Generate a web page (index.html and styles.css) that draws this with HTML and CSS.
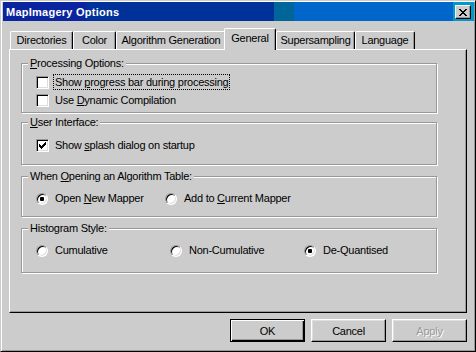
FILE: index.html
```html
<!DOCTYPE html>
<html>
	<head>
		<meta charset="UTF-8">
		<title>MapImagery Options</title>
		<link rel="stylesheet" href="styles.css">
	</head>
	<body>
		<div class="window">
			<div class="titlebar">
				<span class="title">MapImagery Options</span>
				<span class="close">
					<svg width="8" height="7" viewBox="0 0 8 7"><path fill="#000" d="M0 0h2v1h-2z M6 0h2v1h-2z M1 1h2v1h-2z M5 1h2v1h-2z M2 2h4v1h-4z M3 3h2v1h-2z M2 4h4v1h-4z M1 5h2v1h-2z M5 5h2v1h-2z M0 6h2v1h-2z M6 6h2v1h-2z"/></svg>
				</span>
			</div>
			<div class="tabs">
				<span class="tab t-dir">Directories</span>
				<span class="tab t-color">Color</span>
				<span class="tab t-algo">Algorithm Generation</span>
				<span class="tab t-gen active">General</span>
				<span class="tab t-super">Supersampling</span>
				<span class="tab t-lang">Language</span>
			</div>
			<div class="panel">
				<div class="group g-proc">
					<span class="legend"><u>P</u>rocessing Options:</span>
					<div class="opt">
						<span class="check"></span>
						<span class="lbl focus">Show <u>p</u>rogress bar during processing</span>
					</div>
					<div class="opt">
						<span class="check"></span>
						<span class="lbl">Use <u>D</u>ynamic Compilation</span>
					</div>
				</div>
				<div class="group g-ui">
					<span class="legend"><u>U</u>ser Interface:</span>
					<div class="opt">
						<span class="check">
							<svg width="7" height="7" viewBox="0 0 7 7"><path fill="#000" d="M6 0h1v1h-1z M5 1h2v1h-2z M0 2h1v1h-1z M4 2h3v1h-3z M0 3h2v1h-2z M3 3h3v1h-3z M0 4h5v1h-5z M1 5h3v1h-3z M2 6h1v1h-1z"/></svg>
						</span>
						<span class="lbl">Show <u>s</u>plash dialog on startup</span>
					</div>
				</div>
				<div class="group g-open">
					<span class="legend">When <u>O</u>pening an Algorithm Table:</span>
					<div class="opt">
						<div class="choice c-open">
							<span class="radio on"></span>
							<span class="lbl">Open <u>N</u>ew Mapper</span>
						</div>
						<div class="choice">
							<span class="radio"></span>
							<span class="lbl">Add to <u>C</u>urrent Mapper</span>
						</div>
					</div>
				</div>
				<div class="group g-hist">
					<span class="legend">Histogram Style:</span>
					<div class="opt">
						<div class="choice c-hist">
							<span class="radio"></span>
							<span class="lbl">Cumulative</span>
						</div>
						<div class="choice c-hist">
							<span class="radio"></span>
							<span class="lbl">Non-Cumulative</span>
						</div>
						<div class="choice">
							<span class="radio on"></span>
							<span class="lbl">De-Quantised</span>
						</div>
					</div>
				</div>
			</div>
			<div class="buttons">
				<span class="btn default">OK</span>
				<span class="btn">Cancel</span>
				<span class="btn disabled">Apply</span>
			</div>
		</div>
	</body>
</html>
```

FILE: styles.css
```css
body{
	margin: 0;
	font-family: "Liberation Sans", Arial, sans-serif;
	font-size: 11px;
	letter-spacing: -0.25px;
	color: #000;
}
u{
	text-decoration: underline;
}

.window{
	width: 476px;
	height: 352px;
	box-sizing: border-box;
	background: #ccc;
	border: 1px solid;
	border-color: #ccc #000 #000 #ccc;
	box-shadow: inset 1px 1px #fff, inset -1px -1px #999;
	padding: 1px 1px 0 2px;
}

/* caption */
.titlebar{
	height: 19px;
	display: flex;
	align-items: flex-start;
	justify-content: space-between;
	padding: 0 3px;
	background: linear-gradient(to right, #0a24a0 0, #0a24a0 83px, #00309a 83px, #00309a 271px, #006699 271px, #006699 291px, #0066cc 291px, #0066cc 450px, #0099cc 450px);
	color: #fff;
}
.title{
	margin-top: 4px;
	line-height: 13px;
	font-weight: bold;
	letter-spacing: 0.25px;
}
.close{
	box-sizing: border-box;
	width: 16px;
	height: 14px;
	margin-top: 3px;
	background: #ccc;
	border: 1px solid;
	border-color: #fff #000 #000 #fff;
	box-shadow: inset -1px -1px #999;
	display: flex;
	align-items: center;
	justify-content: center;
}
.close svg{
	display: block;
}

/* tabs */
.tabs{
	display: flex;
	align-items: flex-end;
	height: 21px;
	margin: 7px 0 0 7px;
}
.tab{
	box-sizing: border-box;
	height: 18px;
	border: 1px solid;
	border-bottom: 0;
	border-color: #fff #000 #fff #fff;
	border-radius: 2px 2px 0 0;
	box-shadow: inset -1px 0 #999;
	padding-top: 2px;
	line-height: 13px;
	text-align: center;
	white-space: nowrap;
}
.t-dir{ width: 63px; }
.t-color{ width: 43px; }
.t-algo{ width: 110px; }
.t-gen{ width: 52px; margin-left: -2px; }
.t-super{ width: 79px; }
.t-lang{ width: 60px; }
.tab.active{
	height: 22px;
	padding-top: 3px;
	margin-bottom: -1px;
	background: #ccc;
	position: relative;
	z-index: 1;
}

.panel{
	box-sizing: border-box;
	width: 458px;
	height: 264px;
	margin-left: 6px;
	border: 1px solid;
	border-color: #fff #000 #000 #fff;
	box-shadow: inset -1px -1px #999;
	padding: 13px 0 0 11px;
}

/* group boxes */
.group{
	position: relative;
	box-sizing: border-box;
	width: 416px;
	border: 1px solid #999;
	box-shadow: inset 1px 1px #fff, 1px 1px #fff;
	padding-left: 14px;
}
.legend{
	position: absolute;
	top: -7px;
	left: 6px;
	padding: 0 2px;
	line-height: 13px;
	background: #ccc;
	white-space: nowrap;
}
.g-proc{ height: 50px; padding-top: 9px; margin-bottom: 9px; }
.g-ui{ height: 43px; padding-top: 13px; margin-bottom: 11px; }
.g-open{ height: 41px; padding-top: 12px; margin-bottom: 11px; }
.g-hist{ height: 45px; padding-top: 12px; }

.opt, .choice{
	display: flex;
	align-items: flex-start;
	height: 18px;
}
.c-open{ width: 129px; }
.c-hist{ width: 134px; }

.check{
	box-sizing: border-box;
	width: 13px;
	height: 13px;
	margin: 3px 4px 0 0;
	background: #fff;
	border: 1px solid;
	border-color: #999 #fff #fff #999;
	box-shadow: inset 1px 1px #000, inset -1px -1px #ddd;
	display: flex;
	align-items: center;
	justify-content: center;
}
.check svg{
	display: block;
}
.radio{
	box-sizing: border-box;
	width: 12px;
	height: 12px;
	margin: 4px 5px 0 0;
	border-radius: 50%;
	background: #fff;
	border: 1px solid;
	border-color: #999 #fff #fff #999;
	box-shadow: inset 1px 1px #000, inset -1px -1px #ddd;
	display: flex;
	align-items: center;
	justify-content: center;
}
.radio.on:after{
	content: "";
	width: 4px;
	height: 4px;
	border-radius: 1px;
	background: #000;
}
.lbl{
	margin-top: 1px;
	border: 1px dotted transparent;
	padding: 0 1px;
	line-height: 14px;
	white-space: nowrap;
}
.lbl.focus{
	border-color: #000;
}

/* buttons */
.buttons{
	display: flex;
	justify-content: flex-end;
	gap: 6px;
	margin: 6px 7px 0 0;
}
.btn{
	box-sizing: border-box;
	width: 75px;
	height: 23px;
	border: 1px solid;
	border-color: #fff #000 #000 #fff;
	box-shadow: inset -1px -1px #999, inset 1px 1px #dfdfdf;
	display: flex;
	align-items: center;
	justify-content: center;
}
.btn.default{
	border-color: #000;
	box-shadow: inset 1px 1px #fff, inset -1px -1px #000, inset -2px -2px #999;
}
.btn.disabled{
	color: #999;
	text-shadow: 1px 1px #fff;
}
```
